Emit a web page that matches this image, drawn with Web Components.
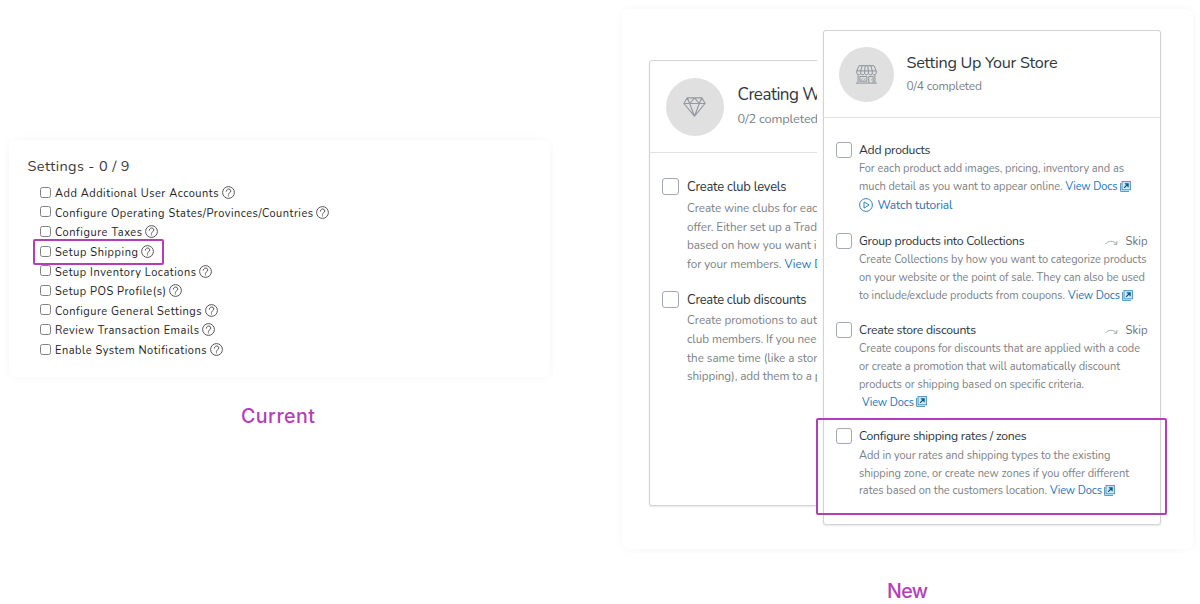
<!DOCTYPE html>
<html lang="en">
<head>
<meta charset="utf-8">
<title>Settings checklist comparison</title>
<style>
html,body{margin:0;height:604px;overflow:hidden;background:#fff}
body{font-family:"Nunito","Lato","Noto Sans",sans-serif;color:#2e383e}
</style>
</head>
<body>
<compare-page></compare-page>
<script>
const define=(name,html,init)=>customElements.define(name,class extends HTMLElement{
  constructor(){super();this.attachShadow({mode:'open'});}
  connectedCallback(){
    this.shadowRoot.innerHTML=typeof html==='function'?html(this):html;
    if(init)init(this);
  }
});

/* One line of text tracked to a given width. */
define('text-line','<style>:host{display:inline-block;white-space:pre;flex:none}span{display:inline-block}</style><span><slot></slot></span>',el=>{
  const w=+el.getAttribute('w'),s=el.shadowRoot.querySelector('span');
  if(!w)return;
  const n=el.textContent.length,ls=(w+.5-s.getBoundingClientRect().width)/(n-1);
  s.style.letterSpacing=ls+'px';
  s.style.marginRight=-ls+'px';
});

define('check-box','<style>:host{display:block;box-sizing:border-box;flex:none;width:var(--box,16px);height:var(--box,16px);border:1px solid var(--edge,#a4a9b1);border-radius:var(--round,3px);background:#fff}</style>');

define('help-icon',`<style>:host{display:block;flex:none;width:13px;height:13px}svg{display:block}</style><svg width="13" height="13" viewBox="0 0 13 13" fill="none" stroke="#444" stroke-width=".9"><circle cx="6.5" cy="6.5" r="5.9"/><path d="M4.3 5.2C4.3 2.2 8.8 2.2 8.8 5c0 1.9-2.4 1.7-2.4 3.3" stroke-linecap="round"/><circle cx="6.4" cy="9.9" r=".35" fill="#444" stroke-width=".4"/></svg>`);

define('doc-icon',`<style>:host{display:block;flex:none;width:11px;height:11px}svg{display:block}</style><svg width="11" height="11" viewBox="0 0 11 11"><path d="M.6 2v8.4H9" fill="none" stroke="#4b92b9" stroke-width="1"/><rect x="2" y=".6" width="8.4" height="8.2" fill="#d8ebf5" stroke="#4b92b9" stroke-width="1"/><path d="M4.1 6.9 7.7 3.2M4.8 2.9h3.3v3.4" fill="none" stroke="#075986" stroke-width="1.25"/></svg>`);

define('play-icon',`<style>:host{display:block;flex:none;width:14px;height:14px}svg{display:block}</style><svg width="14" height="14" viewBox="0 0 14 14" fill="none" stroke="#1976b5" stroke-width=".9"><circle cx="7" cy="7" r="6.4"/><path d="M5 3.9v6.2L10.1 7z" stroke-linejoin="round"/></svg>`);

define('skip-icon',`<style>:host{display:block;flex:none;width:13px;height:8px;margin-top:2px}svg{display:block}</style><svg width="13" height="8" viewBox="0 0 13 8" fill="none" stroke="#9ba0a5" stroke-width=".9"><path d="M.6 5C3.2 1.6 7.9 1.3 11.6 4.9M11.9 2v3.3H8.6"/></svg>`);

define('diamond-icon',`<style>:host{display:block;margin-left:-1px}svg{display:block}</style><svg width="23" height="20" viewBox="0 0 23 20" fill="none" stroke="#949aa1" stroke-width="1.15" stroke-linejoin="round"><path d="M4.2.8h14.6l3.3 5.7-10.6 12.6L.9 6.5zM.9 6.5h21.2M4.2.8l2.5 5.7 4.8-5.7 4.8 5.7 2.5-5.7M6.7 6.5l4.8 12.6 4.8-12.6"/></svg>`);

define('shop-icon',`<style>:host{display:block}svg{display:block}</style><svg width="21" height="19" viewBox="0 0 21 19" fill="none" stroke="#8d939b" stroke-width="1"><path d="M3 .7h15l2.2 5.2v2.2c0 2.1-3.9 2.1-3.9 0 0 2.1-3.9 2.1-3.9 0 0 2.1-3.8 2.1-3.8 0 0 2.1-3.9 2.1-3.9 0 0 2.1-3.9 2.1-3.9 0V5.9zM.8 5.9h19.4M4.7 8V5.9L6.2.7M8.6 8V5.9l.7-5.2M12.4 8V5.9L11.7.7M16.3 8V5.9L14.8.7M2.1 9.7v8M18.9 9.7v8M0 18.1h21M12.8 18v-6.6h4.3V18M3.9 11.4h6.9v4.8H3.9z"/><path d="M5 15.3l2.6-2.6M7.4 15.5l2.2-2.2M15.6 14.2v1.2" stroke-width=".7"/></svg>`);

define('mark-box','<style>:host{display:block;position:absolute;box-sizing:border-box;border:2px solid #b43eb9;border-radius:2px;pointer-events:none}</style>');

define('settings-row',`<style>:host{display:flex;position:relative;height:19.6px;align-items:center}
check-box{--box:11px;--edge:#808080;--round:2.5px;margin:-3px 4px 0 0}help-icon{margin-left:3px;margin-top:-2px}
::slotted(mark-box){left:-7px;top:-4px;width:131px;height:26px}</style><check-box></check-box><slot></slot><help-icon></help-icon><slot name="mark"></slot>`);

define('view-docs',`<style>:host{display:inline-flex;align-items:center;color:#1976b5;gap:2px;margin-left:var(--lead,3px)}doc-icon{margin-top:-1px}</style><text-line w="51.5">View Docs</text-line><doc-icon></doc-icon>`);

define('skip-link',`<style>:host{display:flex;align-items:center;gap:8px;margin:0 1px 0 auto;padding-top:2px;font-size:11.3px;color:#6d7277}</style><skip-icon></skip-icon><text-line w="21.5">Skip</text-line>`);

define('task-item',`<style>:host{display:flex;position:relative}check-box{margin:var(--boxtop,2px) var(--boxgap,7px) 0 0}
.body{flex:1;min-width:0}.head{display:flex;align-items:center;height:var(--headh,20px);font-size:var(--headsize,12.2px);color:#29343a}
.desc{color:#7b7f84;font-size:var(--descsize,11px)}
::slotted(div){display:flex;align-items:center;height:var(--line,17.9px)}</style><check-box></check-box><div class="body"><div class="head"><slot name="title"></slot><slot name="skip"></slot></div><div class="desc"><slot></slot></div></div><slot name="mark"></slot>`);

define('task-panel',`<style>:host{display:block;box-sizing:border-box;border:1px solid #d2d4d6;border-radius:3px;background:#fff;box-shadow:0 1px 2px rgba(0,0,0,.1)}
header{display:flex;box-sizing:border-box;height:var(--top);border-bottom:1px solid #dfe1e3;padding:var(--hpad)}
.disc{display:grid;place-items:center;width:var(--disc);height:var(--disc);border-radius:50%;background:#e0e0e0;flex:none}
.heading{display:flex;flex-direction:column;align-items:flex-start;gap:var(--tgap);margin:var(--tpad)}
::slotted([slot=title]){font-size:var(--ts);line-height:24px}
::slotted([slot=count]){font-size:var(--cs);line-height:20px;color:#7b7f84}
main{padding:var(--mpad)}</style><header><div class="disc"><slot name="icon"></slot></div><div class="heading"><slot name="title"></slot><slot name="count"></slot></div></header><main><slot></slot></main>`);

define('soft-card','<style>:host{display:block;box-sizing:border-box;background:#fff;border-radius:7px;box-shadow:0 0 9px rgba(0,0,0,.045)}</style><slot></slot>');

define('card-caption','<style>:host{display:flex;justify-content:center;font:500 19.6px/26px "Inter",sans-serif;color:#b43eb9}</style><slot></slot>');

const rows=[['Add Additional User Accounts',163],['Configure Operating States/Provinces/Countries',257.5],['Configure Taxes',86.5],['Setup Shipping',82.5],['Setup Inventory Locations',140.5],['Setup POS Profile(s)',110.5],['Configure General Settings',146],['Review Transaction Emails',143.5],['Enable System Notifications',151]];

define('current-side',`<style>:host{display:block;width:541px;margin:140px 0 0 9px}soft-card{height:237px;padding:15px 0 0 18.5px}
h2{margin:0;font-weight:400;font-size:14.5px;line-height:23px;color:#3a3a3a}
.list{padding:6px 0 0 12.5px;font-size:11px;color:#222}card-caption{margin-top:26px;padding-right:3px}</style>
<soft-card><h2><text-line w="101.5">Settings - 0 / 9</text-line></h2><div class="list">${rows.map(([t,w])=>`<settings-row><text-line w="${w}">${t}</text-line>${t==='Setup Shipping'?'<mark-box slot="mark"></mark-box>':''}</settings-row>`).join('')}</div></soft-card>
<card-caption><text-line w="73.5">Current</text-line></card-caption>`);

const line=(t,w,extra='')=>`<div><text-line w="${w}">${t}</text-line>${extra}</div>`;
const title=(t,w)=>`<text-line slot="title" w="${w}">${t}</text-line>`;
const docs='<view-docs></view-docs>',skip='<skip-link slot="skip"></skip-link>';

define('new-side',`<style>:host{display:block;width:571px;margin:9px 0 0 72px}
soft-card{height:540px;padding:21px 0 0 27px}
.stage{display:flex;gap:6px;align-items:flex-start}
.clip{width:169px;height:450px;overflow:hidden;flex:none;margin:30px 0 0 -1px;padding-left:1px;box-sizing:border-box}
.club{width:338px;height:446px;--top:92px;--hpad:17px 16px;--tpad:4.5px 0 0 13.5px;--tgap:2.5px;--disc:58px;--ts:17px;--cs:12.8px;--mpad:23.4px 12px;
--box:17px;--headh:22px;--headsize:12.9px;--descsize:11.7px;--line:18.8px;--boxtop:2px;--boxgap:8px}
.store{width:338px;height:495px;flex:none;--top:87px;--hpad:16px 15px;--tpad:3.5px 0 0 12.5px;--tgap:1.5px;--disc:55px;--ts:16.2px;--cs:12px;--mpad:22px 11.5px;--boxgap:7.5px;position:relative}
.store task-item+task-item{margin-top:15px}.store task-item:nth-of-type(2){margin-top:17.3px!important}
.club task-item+task-item{margin-top:15px}
.link{color:#1976b5}.watch{color:#1976b5;font-size:12px;gap:4.5px}
.late{--lead:3px}
.store mark-box{left:-19.5px;top:-8px;width:351px;height:97px}
card-caption{margin-top:29px}</style>
<soft-card><div class="stage"><div class="clip"><task-panel class="club"><diamond-icon slot="icon"></diamond-icon><text-line slot="title" w="83">Creating W</text-line><text-line slot="count" w="80">0/2 completed</text-line>
<task-item>${title('Create club levels',99)}${line('Create wine clubs for eac',130)}${line('offer. Either set up a Trad',129.5)}${line('based on how you want i',129)}${line('for your members.',94,'<text-line class="link" w="38" style="margin-left:3px">View D</text-line>')}</task-item>
<task-item>${title('Create club discounts',119)}${line('Create promotions to aut',129.5)}${line('club members. If you nee',129)}${line('the same time (like a stor',130)}${line('shipping), add them to a p',134)}</task-item>
</task-panel></div>
<task-panel class="store"><shop-icon slot="icon"></shop-icon><text-line slot="title" w="150.5">Setting Up Your Store</text-line><text-line slot="count" w="75">0/4 completed</text-line>
<task-item>${title('Add products',71)}${line('For each product add images, pricing, inventory and as',264.5)}${line('much detail as you want to appear online.',203,docs)}<div class="watch"><play-icon></play-icon><text-line w="74.5">Watch tutorial</text-line></div></task-item>
<task-item>${title('Group products into Collections',165)}${skip}${line('Create Collections by how you want to categorize products',287)}${line('on your website or the point of sale. They can also be used',285.5)}${line('to include/exclude products from coupons.',205.5,docs)}</task-item>
<task-item>${title('Create store discounts',116.5)}${skip}${line('Create coupons for discounts that are applied with a code',280.5)}${line('or create a promotion that will automatically discount',260.5)}${line('products or shipping based on specific criteria.',224.5)}<div class="late">${docs}</div></task-item>
<task-item>${title('Configure shipping rates / zones',167)}${line('Add in your rates and shipping types to the existing',251)}${line('shipping zone, or create new zones if you offer different',269.5)}${line('rates based on the customers location.',187.5,docs)}<mark-box slot="mark"></mark-box></task-item>
</task-panel></div></soft-card>
<card-caption><text-line w="40.5">New</text-line></card-caption>`);

define('compare-page','<style>:host{display:flex;width:1200px;height:604px;overflow:hidden;align-items:flex-start}current-side,new-side{flex:none}</style><current-side></current-side><new-side></new-side>');
</script>
</body>
</html>
